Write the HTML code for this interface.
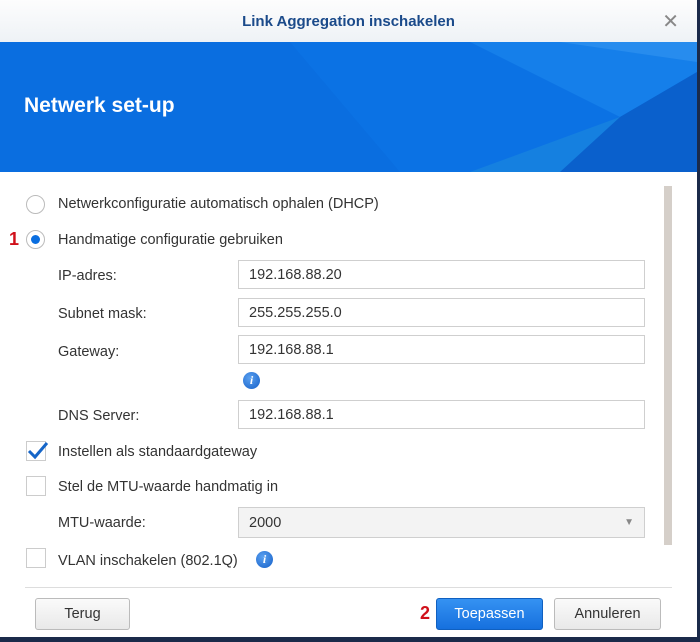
<!DOCTYPE html><html><head><style>
body{margin:0;width:700px;height:642px;overflow:hidden;background:#1b2a4a;font-family:"Liberation Sans","DejaVu Sans",sans-serif;}
.win{position:absolute;left:0;top:0;width:697px;height:637px;background:#fff;}
.title{position:absolute;left:0;top:0;width:697px;height:42px;background:linear-gradient(#fdfdfd,#eef2f6);border-bottom:1px solid #d0d8e2;text-align:center;line-height:44px;color:#1a4a8a;font-weight:bold;font-size:15px}
.x{position:absolute;right:18px;top:0;color:#888;font-size:20px;font-weight:normal}
.banner{position:absolute;left:0;top:42px;width:697px;height:130px;overflow:hidden;background:#0a6ee0}
.banner h1{position:absolute;left:24px;top:52px;margin:0;color:#fff;font-size:21px;font-weight:bold}
.t{position:absolute;font-size:14.5px;color:#333}
.inp{position:absolute;left:238px;width:407px;height:29px;border:1px solid #cfcfcf;background:#fff;box-sizing:border-box;padding-left:10px;line-height:29px;font-size:14.5px;color:#333}
.radio{position:absolute;left:26px;width:19px;height:19px;border:1px solid #bbb;border-radius:50%;box-sizing:border-box;background:#fff}
.cb{position:absolute;left:26px;width:20px;height:20px;border:1px solid #ccc;box-sizing:border-box;background:#fff}
.info{position:absolute;width:17px;height:17px;border-radius:50%;background:radial-gradient(circle at 40% 35%,#5aa0f0,#1560c8);color:#fff;font:italic bold 12px "Liberation Serif",serif;text-align:center;line-height:17px}
.red{position:absolute;color:#d0101a;font-weight:bold;font-size:18px}
.btn{position:absolute;top:598px;height:32px;border:1px solid #bbb;border-radius:3px;background:linear-gradient(#fafafa,#e9e9e9);box-sizing:border-box;text-align:center;line-height:30px;font-size:14.5px;color:#333}
</style></head><body>
<div class="win">
<div class="title">Link Aggregation inschakelen<span class="x">✕</span></div>
<div class="banner">
<svg width="697" height="130" style="position:absolute;left:0;top:0">
<polygon points="290,0 697,0 697,130 400,130" fill="#0b72e4"/>
<polygon points="470,0 697,0 697,30 620,75" fill="#1a84ec" opacity=".7"/>
<polygon points="620,75 697,30 697,130 520,130" fill="#0a60cc"/>
<polygon points="470,130 620,75 560,130" fill="#1580e0"/>
<polygon points="560,0 697,0 697,20" fill="#3a9af2" opacity=".5"/>
</svg>
<h1>Netwerk set-up</h1></div>
<div style="position:absolute;left:664px;top:186px;width:8px;height:359px;background:#d5cfc9"></div>
<div class="radio" style="top:195px"></div><div class="t" style="left:58px;top:196px">Netwerkconfiguratie automatisch ophalen (DHCP)</div>
<div class="red" style="left:9px;top:229px">1</div>
<div class="radio" style="top:230px"><div style="position:absolute;left:4px;top:4px;width:9px;height:9px;border-radius:50%;background:#0a6ee0"></div></div>
<div class="t" style="left:58px;top:232px">Handmatige configuratie gebruiken</div>
<div class="t" style="left:58px;top:268px">IP-adres:</div><div class="inp" style="top:260px">192.168.88.20</div>
<div class="t" style="left:58px;top:306px">Subnet mask:</div><div class="inp" style="top:298px">255.255.255.0</div>
<div class="t" style="left:58px;top:344px">Gateway:</div><div class="inp" style="top:335px">192.168.88.1</div>
<div class="info" style="left:243px;top:372px">i</div>
<div class="t" style="left:58px;top:408px">DNS Server:</div><div class="inp" style="top:400px">192.168.88.1</div>
<div class="cb" style="top:441px"><svg width="22" height="20" style="position:absolute;left:0;top:-2px"><path d="M2 11 L8 17 L20 3" stroke="#1565c8" stroke-width="3" fill="none"/></svg></div>
<div class="t" style="left:58px;top:444px">Instellen als standaardgateway</div>
<div class="cb" style="top:476px"></div><div class="t" style="left:58px;top:479px">Stel de MTU-waarde handmatig in</div>
<div class="t" style="left:58px;top:515px">MTU-waarde:</div>
<div class="inp" style="top:507px;height:31px;background:#f3f3f3;line-height:30px">2000<span style="position:absolute;right:10px;top:0;color:#888;font-size:10px">▼</span></div>
<div class="cb" style="top:548px"></div><div class="t" style="left:58px;top:553px">VLAN inschakelen (802.1Q)</div>
<div class="info" style="left:256px;top:551px">i</div>
<div style="position:absolute;left:25px;top:587px;width:647px;height:1px;background:#ddd"></div>
<div class="btn" style="left:35px;width:95px">Terug</div>
<div class="red" style="left:420px;top:603px">2</div>
<div class="btn" style="left:436px;width:107px;background:linear-gradient(#3592f2,#1670de);border-color:#1060c0;color:#fff">Toepassen</div>
<div class="btn" style="left:554px;width:107px">Annuleren</div>
</div>
</body></html>
